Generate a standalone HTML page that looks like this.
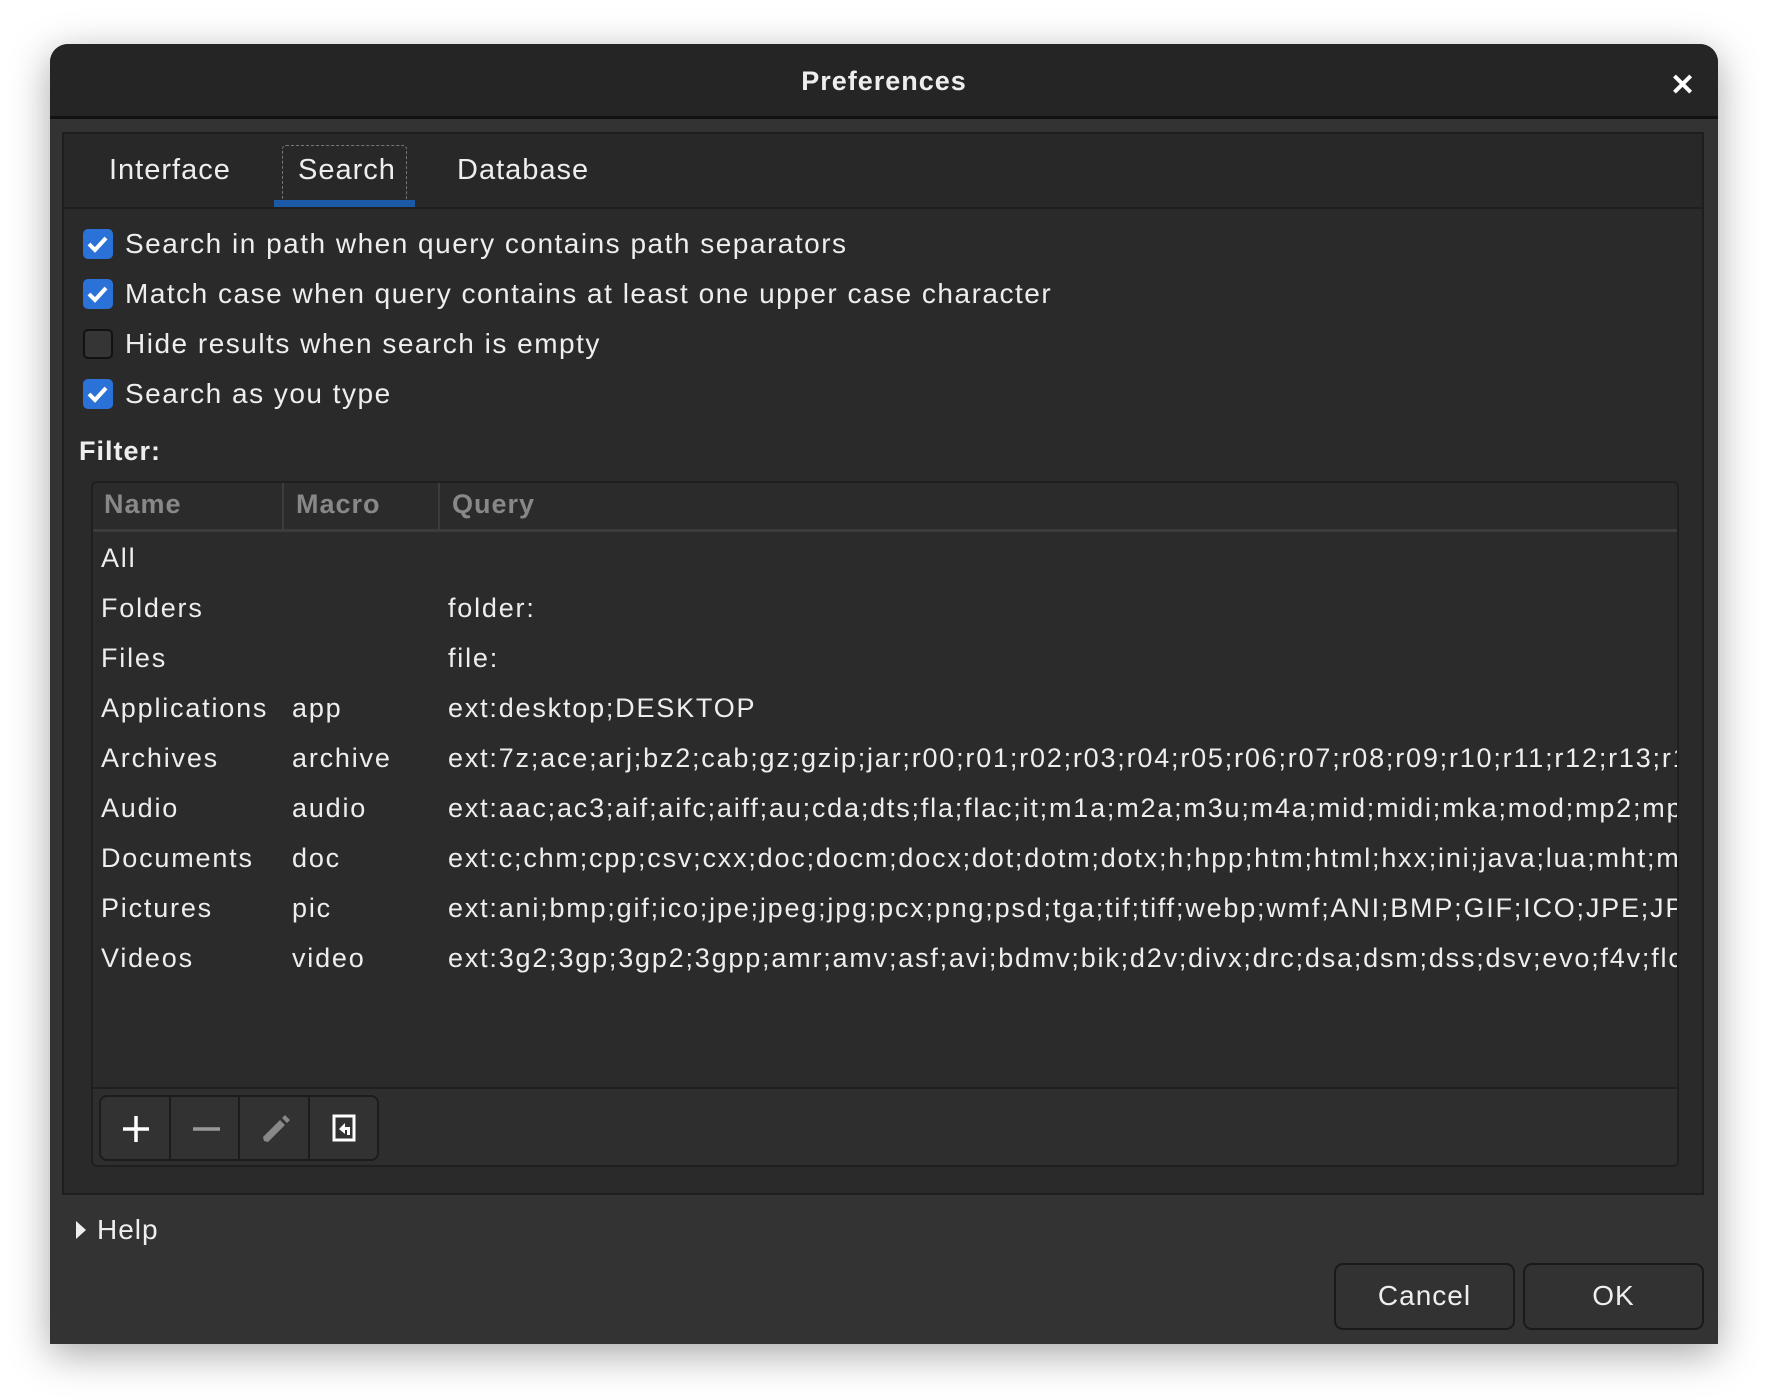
<!DOCTYPE html>
<html><head><meta charset="utf-8"><style>
*{margin:0;padding:0;box-sizing:border-box}
body{width:1768px;height:1400px;background:#fff;font-family:"Liberation Sans",sans-serif;position:relative;overflow:hidden;color:#eee}
.win{position:absolute;left:50px;top:44px;width:1668px;height:1300px;background:#333;border-radius:18px 18px 0 0;box-shadow:0 10px 40px rgba(0,0,0,.35);overflow:hidden}
.title{position:absolute;left:0;top:0;width:100%;height:75px;background:#252525;border-bottom:3px solid #111}
.title span{position:absolute;left:0;right:0;top:22px;text-align:center;font-weight:bold;font-size:27px;color:#eee;letter-spacing:1px}
.x{position:absolute;left:1620px;top:24px;font-size:30px;font-weight:bold;color:#fff}
.nb{position:absolute;left:12px;top:88px;width:1642px;height:1063px;background:#2a2a2a;border:2px solid #1e1e1e}
.tabs{position:absolute;left:0;top:0;width:100%;height:75px;background:#282828;border-bottom:2px solid #1f1f1f}
.tab{position:absolute;top:20px;font-size:29px;color:#eee;letter-spacing:1px}
.a{position:absolute}
.cb{position:absolute;left:19px;width:30px;height:30px;border-radius:5px;background:#2a72d8}
.cb svg{position:absolute;left:4px;top:6px}
.cb.off{background:#353535;border:2px solid #111}
.lbl{position:absolute;left:61px;font-size:28px;color:#eee;letter-spacing:1.5px}
.tbl{position:absolute;left:27px;top:347px;width:1588px;height:686px;border:2px solid #1f1f1f;border-radius:6px;background:#2b2b2b;overflow:hidden}
.hdr{position:absolute;left:0;top:0;width:100%;height:49px;border-bottom:3px solid #3c3c3c}
.hdr div{position:absolute;top:6px;font-weight:bold;font-size:27px;color:#888;letter-spacing:1px}
.vd{position:absolute;top:0;width:2px;height:49px;background:#3c3c3c}
.row{position:absolute;left:0;width:100%;height:50px;font-size:27px;color:#eee;white-space:nowrap;letter-spacing:1.8px}
.row span{position:absolute;top:8px}
.tb{position:absolute;left:0;top:604px;width:100%;height:82px;border-top:2px solid #1f1f1f;background:#2e2e2e}
.btns{position:absolute;left:6px;top:6px;width:280px;height:66px;border:2px solid #1c1c1c;border-radius:8px;background:#323232;display:flex}
.btns div{flex:1;border-right:2px solid #1c1c1c;position:relative}
.btns div:last-child{border-right:none}
.pb{position:absolute;top:1219px;height:67px;width:181px;border:2px solid #1a1a1a;border-radius:9px;background:#323232;font-size:28px;text-align:center;line-height:62px;color:#eee;letter-spacing:1px}
</style></head><body>
<div class="win">
 <div class="title"><span>Preferences</span><div class="x">✕</div></div>
 <div class="nb">
  <div class="tabs">
   <div class="tab" style="left:45px">Interface</div>
   <div class="a" style="left:218px;top:11px;width:125px;height:57px;border:1px dashed #777;border-radius:4px"></div>
   <div class="tab" style="left:234px">Search</div>
   <div class="a" style="left:210px;top:66px;width:141px;height:7px;background:#1c5aa8"></div>
   <div class="tab" style="left:393px">Database</div>
  </div>
  <div class="cb" style="top:95px"><svg width="21" height="18" viewBox="0 0 21 18"><path d="M2 9l6 6L19 3" stroke="#fff" stroke-width="4" fill="none"/></svg></div>
  <div class="lbl" style="top:94px">Search in path when query contains path separators</div>
  <div class="cb" style="top:145px"><svg width="21" height="18" viewBox="0 0 21 18"><path d="M2 9l6 6L19 3" stroke="#fff" stroke-width="4" fill="none"/></svg></div>
  <div class="lbl" style="top:144px">Match case when query contains at least one upper case character</div>
  <div class="cb off" style="top:195px"></div>
  <div class="lbl" style="top:194px">Hide results when search is empty</div>
  <div class="cb" style="top:245px"><svg width="21" height="18" viewBox="0 0 21 18"><path d="M2 9l6 6L19 3" stroke="#fff" stroke-width="4" fill="none"/></svg></div>
  <div class="lbl" style="top:244px">Search as you type</div>
  <div class="a" style="left:15px;top:302px;font-weight:bold;font-size:27px;color:#eee;letter-spacing:1px">Filter:</div>
  <div class="tbl">
   <div class="hdr">
    <div style="left:11px">Name</div><div class="vd" style="left:189px;top:0"></div>
    <div style="left:203px">Macro</div><div class="vd" style="left:345px;top:0"></div>
    <div style="left:359px">Query</div>
   </div>
   <div class="row" style="top:52px"><span style="left:8px">All</span></div>
   <div class="row" style="top:102px"><span style="left:8px">Folders</span><span style="left:355px">folder:</span></div>
   <div class="row" style="top:152px"><span style="left:8px">Files</span><span style="left:355px">file:</span></div>
   <div class="row" style="top:202px"><span style="left:8px">Applications</span><span style="left:199px">app</span><span style="left:355px">ext:desktop;DESKTOP</span></div>
   <div class="row" style="top:252px"><span style="left:8px">Archives</span><span style="left:199px">archive</span><span style="left:355px">ext:7z;ace;arj;bz2;cab;gz;gzip;jar;r00;r01;r02;r03;r04;r05;r06;r07;r08;r09;r10;r11;r12;r13;r14</span></div>
   <div class="row" style="top:302px"><span style="left:8px">Audio</span><span style="left:199px">audio</span><span style="left:355px">ext:aac;ac3;aif;aifc;aiff;au;cda;dts;fla;flac;it;m1a;m2a;m3u;m4a;mid;midi;mka;mod;mp2;mp3</span></div>
   <div class="row" style="top:352px"><span style="left:8px">Documents</span><span style="left:199px">doc</span><span style="left:355px">ext:c;chm;cpp;csv;cxx;doc;docm;docx;dot;dotm;dotx;h;hpp;htm;html;hxx;ini;java;lua;mht;mhtml</span></div>
   <div class="row" style="top:402px"><span style="left:8px">Pictures</span><span style="left:199px">pic</span><span style="left:355px">ext:ani;bmp;gif;ico;jpe;jpeg;jpg;pcx;png;psd;tga;tif;tiff;webp;wmf;ANI;BMP;GIF;ICO;JPE;JPEG</span></div>
   <div class="row" style="top:452px"><span style="left:8px">Videos</span><span style="left:199px">video</span><span style="left:355px">ext:3g2;3gp;3gp2;3gpp;amr;amv;asf;avi;bdmv;bik;d2v;divx;drc;dsa;dsm;dss;dsv;evo;f4v;flc</span></div>
   <div class="tb"><div class="btns">
    <div><svg style="position:absolute;left:20px;top:17px" width="30" height="30"><path d="M15 2v26M2 15h26" stroke="#fff" stroke-width="3.5"/></svg></div>
    <div><svg style="position:absolute;left:20px;top:17px" width="30" height="30"><path d="M2 15h27" stroke="#999" stroke-width="3.5"/></svg></div>
    <div><svg style="position:absolute;left:20px;top:16px" width="30" height="30"><path d="M4 28l-1-4L20 7l5 5L8 29z M22 5l3-3 5 5-3 3z" fill="#888"/></svg></div>
    <div><svg style="position:absolute;left:20px;top:16px" width="30" height="30"><path d="M4 3h20v24H4z" stroke="#fff" stroke-width="3" fill="none"/><path d="M9 16l6-6v4h5v8h-3v-5h-2v4z" fill="#fff"/></svg></div>
   </div></div>
  </div>
 </div>
 <svg class="a" style="left:25px;top:1176px" width="12" height="20"><path d="M1 1l10 9-10 9z" fill="#eee"/></svg>
 <div class="a" style="left:47px;top:1170px;font-size:28px;color:#eee;letter-spacing:1px">Help</div>
 <div class="pb" style="left:1284px">Cancel</div>
 <div class="pb" style="left:1473px">OK</div>
</div>
</body></html>
